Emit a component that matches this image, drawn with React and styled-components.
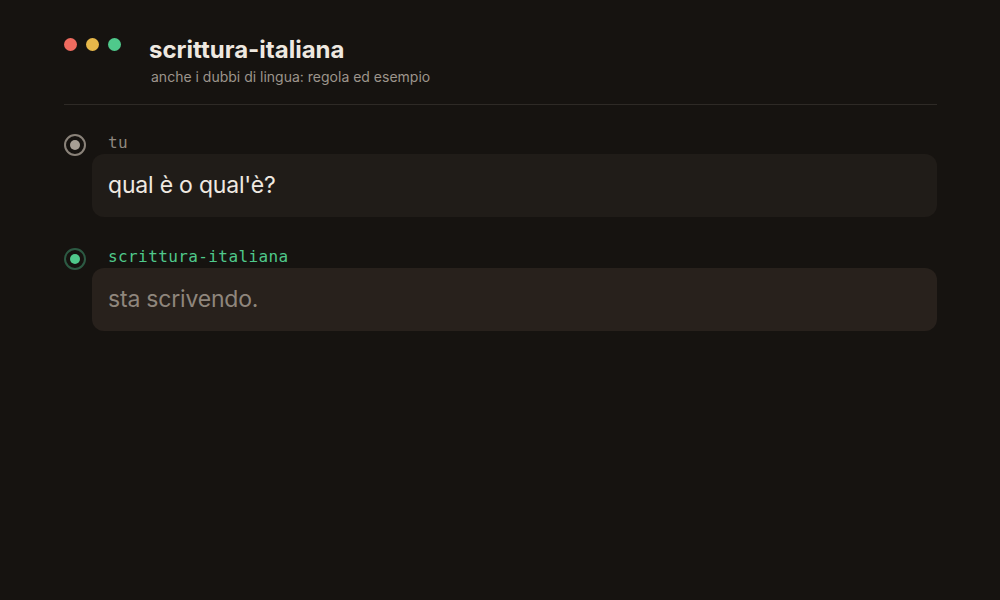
import React from "react";
import styled, { createGlobalStyle } from "styled-components";

const Global = createGlobalStyle`
  html, body { margin: 0; padding: 0; background: #161310; }
  body { font-family: Inter, "Noto Sans", sans-serif; }
  #root { min-height: 600px; }
`;

const Page = styled.div`
  box-sizing: border-box;
  width: 1000px;
  height: 600px;
  padding: 32px 63px 0 64px;
  background: #161310;
`;

const Header = styled.header`
  display: flex;
  align-items: flex-start;
  gap: 28px;
  padding-bottom: 19px;
  border-bottom: 1px solid #2e2a26;
`;

const Lights = styled.div`
  display: flex;
  gap: 9px;
  padding-top: 6px;
`;

const Light = styled.span`
  width: 13px;
  height: 13px;
  border-radius: 50%;
  background: ${(p) => p.$color};
`;

const Titles = styled.div`
  display: flex;
  flex-direction: column;
  gap: 1px;
  padding-top: 1px;
`;

const Title = styled.h1`
  margin: 0;
  font-size: 24px;
  font-weight: 700;
  line-height: 34px;
  color: #eee8e0;
`;

const Subtitle = styled.p`
  margin: 0 0 0 2px;
  font-size: 14px;
  line-height: 17px;
  color: #9d958c;
`;

const Thread = styled.div`
  display: flex;
  flex-direction: column;
  gap: 31px;
  padding-top: 29px;
`;

const Message = styled.div`
  display: flex;
  align-items: flex-start;
  gap: 6px;
`;

const Avatar = styled.span`
  box-sizing: border-box;
  flex: none;
  width: 22px;
  height: 22px;
  border-radius: 50%;
  border: 2px solid ${(p) => p.$ring};
  display: flex;
  align-items: center;
  justify-content: center;
  &::after {
    content: "";
    width: 10px;
    height: 10px;
    border-radius: 50%;
    background: ${(p) => p.$dot};
  }
`;

const Body = styled.div`
  flex: 1;
  display: flex;
  flex-direction: column;
  gap: 2px;
`;

const Author = styled.span`
  padding-left: 16px;
  font-family: "DejaVu Sans Mono", "Liberation Mono", monospace;
  font-size: 16px;
  line-height: 18px;
  letter-spacing: 0.4px;
  color: ${(p) => p.$color};
`;

const Bubble = styled.div`
  box-sizing: border-box;
  height: 63px;
  display: flex;
  align-items: center;
  padding: 0 16px 2px;
  border-radius: 12px;
  background: ${(p) => p.$bg};
  color: ${(p) => p.$color};
  font-size: 23px;
  letter-spacing: -0.2px;
`;

export default function App() {
  return (
    <Page>
      <Global />
      <Header>
        <Lights>
          <Light $color="#ef6b5f" />
          <Light $color="#e7b84a" />
          <Light $color="#4fc98b" />
        </Lights>
        <Titles>
          <Title>scrittura-italiana</Title>
          <Subtitle>anche i dubbi di lingua: regola ed esempio</Subtitle>
        </Titles>
      </Header>
      <Thread>
        <Message>
          <Avatar $ring="#8a8279" $dot="#a79e94" />
          <Body>
            <Author $color="#8f877e">tu</Author>
            <Bubble $bg="#201c18" $color="#efe9e1">qual è o qual'è?</Bubble>
          </Body>
        </Message>
        <Message>
          <Avatar $ring="#2c5a43" $dot="#4fc98b" />
          <Body>
            <Author $color="#4fc98b">scrittura-italiana</Author>
            <Bubble $bg="#28211c" $color="#8f867c">sta scrivendo.</Bubble>
          </Body>
        </Message>
      </Thread>
    </Page>
  );
}
